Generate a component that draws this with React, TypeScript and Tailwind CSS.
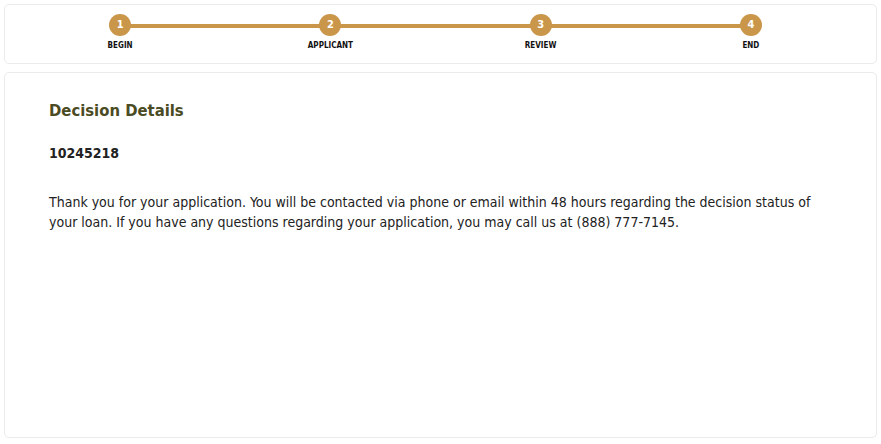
import React from "react";

const steps = ["BEGIN", "APPLICANT", "REVIEW", "END"];

export default function App() {
  return (
    <div className="min-h-[444px] w-[881px] bg-white p-[4px] text-[#222]" style={{ fontFamily: '"DejaVu Sans Condensed", "DejaVu Sans", sans-serif' }}>
      <div className="h-[60px] rounded-[5px] border border-[#ebebeb] bg-white">
        <div className="relative ml-[10px] mr-[20px] grid grid-cols-4 pt-[9px]">
          <div className="absolute left-[105px] right-[105px] top-[19px] h-[4px] bg-[#c9964a]" />
          {steps.map((s, i) => (
            <div key={s} className="relative flex flex-col items-center">
              <div className="flex h-[22px] w-[22px] items-center justify-center rounded-full bg-[#c9964a] text-[11px] font-bold text-white">
                {i + 1}
              </div>
              <div className="mt-[5px] text-[8px] font-bold leading-[10px] text-[#111]">{s}</div>
            </div>
          ))}
        </div>
      </div>
      <div className="mt-[8px] h-[366px] rounded-[5px] border border-[#ebebeb] bg-white px-[44px] pt-[26px]">
        <h2 className="text-[16.5px] font-bold leading-[24px] text-[#4b4b23]">Decision Details</h2>
        <div className="mt-[20px] text-[14px] font-bold leading-[20px] text-[#222]">10245218</div>
        <p className="mt-[29px] text-[14px] leading-[20px] text-[#222]">
          Thank you for your application. You will be contacted via phone or email within 48 hours regarding the decision status of your loan. If you have any questions regarding your application, you may call us at (888) 777-7145.
        </p>
      </div>
    </div>
  );
}
